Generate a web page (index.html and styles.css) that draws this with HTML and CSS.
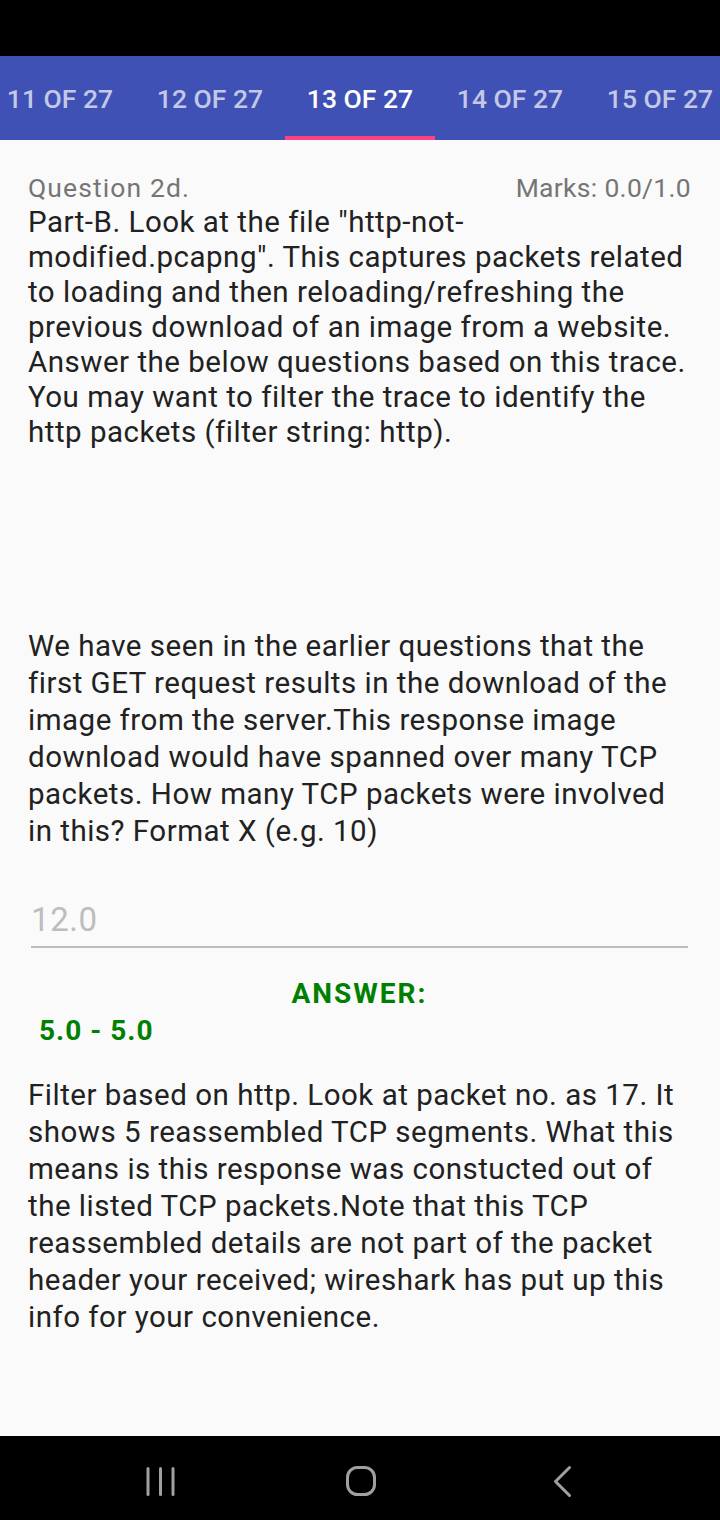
FILE: index.html
```html
<!DOCTYPE html>
<html>
<head>
<meta charset="utf-8">
<link rel="stylesheet" href="styles.css">
</head>
<body>
<div class="status"></div>
<div class="tabs">
  <div class="tab">11 OF 27</div>
  <div class="tab">12 OF 27</div>
  <div class="tab active">13 OF 27</div>
  <div class="tab">14 OF 27</div>
  <div class="tab">15 OF 27</div>
</div>
<main class="content">
  <div class="head">
    <span class="qlabel">Question 2d.</span>
    <span class="marks">Marks: 0.0/1.0</span>
  </div>
  <p class="p1">Part-B. Look at the file "http-not-<br>modified.pcapng". This captures packets related<br>to loading and then reloading/refreshing the<br>previous download of an image from a website.<br>Answer the below questions based on this trace.<br>You may want to filter the trace to identify the<br>http packets (filter string: http).</p>
  <p class="p2">We have seen in the earlier questions that the<br>first GET request results in the download of the<br>image from the server.This response image<br>download would have spanned over many TCP<br>packets. How many TCP packets were involved<br>in this? Format X (e.g. 10)</p>
  <div class="input">12.0</div>
  <div class="answer">ANSWER:</div>
  <div class="range">5.0 - 5.0</div>
  <p class="p3">Filter based on http. Look at packet no. as 17. It<br>shows 5 reassembled TCP segments. What this<br>means is this response was constucted out of<br>the listed TCP packets.Note that this TCP<br>reassembled details are not part of the packet<br>header your received; wireshark has put up this<br>info for your convenience.</p>
</main>
<div class="nav">
  <svg class="ic" width="40" height="40" viewBox="0 0 40 40"><g stroke="#a0a0a0" stroke-width="3" stroke-linecap="round"><line x1="6" y1="7.5" x2="6" y2="33.5"/><line x1="18.5" y1="7.5" x2="18.5" y2="33.5"/><line x1="31" y1="7.5" x2="31" y2="33.5"/></g></svg>
  <svg class="ic" width="40" height="40" viewBox="0 0 40 40"><rect x="5.5" y="6.5" width="27" height="27" rx="10" fill="none" stroke="#a0a0a0" stroke-width="3"/></svg>
  <svg class="ic" width="40" height="40" viewBox="0 0 40 40"><polyline points="27.5,6.5 13.5,20.5 27.5,34.5" fill="none" stroke="#a0a0a0" stroke-width="3" stroke-linecap="round" stroke-linejoin="round"/></svg>
</div>
</body>
</html>
```
FILE: styles.css
```css
html, body {
  margin: 0;
  padding: 0;
  background: #fafafa;
  font-family: Roboto, "Noto Sans", sans-serif;
}
body {
  width: 720px;
  height: 1520px;
  display: flex;
  flex-direction: column;
  overflow: hidden;
}
.status {
  height: 56px;
  background: #000;
  flex: none;
}
.tabs {
  height: 84px;
  background: #3f51b5;
  display: flex;
  margin-left: -15px;
  flex: none;
}
.tab {
  width: 150px;
  flex: none;
  box-sizing: border-box;
  display: flex;
  align-items: center;
  justify-content: center;
  color: rgba(255,255,255,0.7);
  font-size: 26.5px;
  font-weight: 500;
  border-bottom: 4px solid transparent;
  padding-top: 4px;
  white-space: nowrap;
}
.tab.active {
  color: #fff;
  border-bottom-color: #ff4081;
}
.content {
  flex: 1;
  padding: 30px 29px 0 28px;
  color: #212121;
}
.head {
  display: flex;
  justify-content: space-between;
  font-size: 26.5px;
  color: #757575;
  line-height: 35px;
}
.qlabel {
  letter-spacing: 1.1px;
}
.marks {
  letter-spacing: 0.3px;
}
p {
  margin: 0;
  font-size: 29.5px;
  letter-spacing: 0.5px;
  white-space: nowrap;
}
.p1 {
  line-height: 35px;
}
.p2 {
  line-height: 37px;
  margin-top: 178px;
}
.input {
  margin: 50px 3px 0 3px;
  font-size: 33px;
  letter-spacing: 0.6px;
  color: #bdbdbd;
  line-height: 40px;
  padding-bottom: 6px;
  border-bottom: 2px solid #bdbdbd;
}
.answer {
  text-align: center;
  color: #008000;
  font-weight: 700;
  font-size: 28px;
  letter-spacing: 2px;
  line-height: 36px;
  margin-top: 28px;
}
.range {
  color: #008000;
  font-weight: 700;
  font-size: 28px;
  letter-spacing: 1px;
  line-height: 38px;
  padding-left: 11px;
}
.p3 {
  line-height: 37px;
  margin-top: 27px;
}
.nav {
  height: 84px;
  box-sizing: border-box;
  padding: 6px 138px 0 142px;
  background: #000;
  flex: none;
  display: flex;
  align-items: center;
  justify-content: space-between;
}
.ic {
  display: block;
}
```
